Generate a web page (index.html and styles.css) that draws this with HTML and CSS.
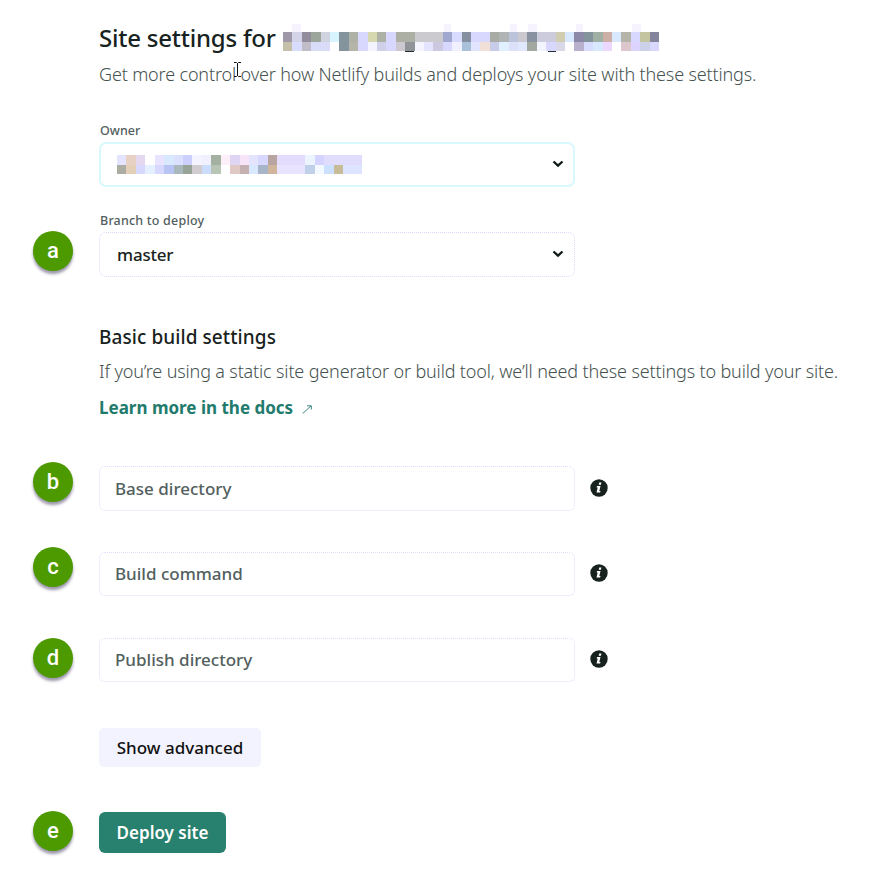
FILE: index.html
```html
<!DOCTYPE html>
<html lang="en">
<head>
<meta charset="utf-8">
<title>Site settings</title>
<link rel="stylesheet" href="styles.css">
</head>
<body>
<main class="page">
  <header class="intro">
    <h1><span class="title-text">Site settings for</span><svg class="mosaic title-mosaic" viewBox="0 0 376 28" width="376" height="28" aria-hidden="true"></svg></h1>
    <p class="lead"><span class="lead-text">Get more control over how Netlify builds and deploys your site with these settings.</span>
      <svg class="cursor" width="9" height="17" viewBox="0 0 9 17" aria-hidden="true"><path d="M1 1.500h2.500l1 1 1-1H8M4.500 2v13M1 15.500h2.500l1-1 1 1H8" fill="none" stroke="#111"/></svg>
    </p>
  </header>

  <section class="field owner">
    <label>Owner</label>
    <div class="select focused">
      <svg class="mosaic owner-mosaic" viewBox="0 0 245 19" width="245" height="19" aria-hidden="true"></svg>
      <svg class="chevron" width="12" height="8" viewBox="0 0 12 8"><path d="M1.500 1.500 6 5.700l4.500-4.200"/></svg>
    </div>
  </section>

  <section class="row branch">
    <span class="badge">a</span>
    <div class="field">
      <label class="branch-label">Branch to deploy</label>
      <div class="select"><span class="master">master</span>
        <svg class="chevron" width="12" height="8" viewBox="0 0 12 8"><path d="M1.500 1.500 6 5.700l4.500-4.200"/></svg>
      </div>
    </div>
  </section>

  <section class="build">
    <h2>Basic build settings</h2>
    <p class="build-text">If you’re using a static site generator or build tool, we’ll need these settings to build your site.</p>
    <a class="docs">Learn more in the docs <svg width="10" height="9" viewBox="0 0 10 9"><path d="M.7 8.500 9 .9M5 .8h4.300v3.700" fill="none" stroke="#3a8581"/></svg></a>
  </section>

  <section class="row base">
    <span class="badge">b</span>
    <div class="input">Base directory</div>
    <svg class="info" width="18" height="18" viewBox="0 0 18 18"><circle cx="9" cy="9" r="8.700"/><path d="M9.200 3.500h2.200l-.5 2.200H8.700zM7 7h3.500l-1.200 5h1.200l-.4 1.500H6.500L7.700 8.400H6.600z"/></svg>
  </section>
  <section class="row command">
    <span class="badge">c</span>
    <div class="input">Build command</div>
    <svg class="info" width="18" height="18" viewBox="0 0 18 18"><circle cx="9" cy="9" r="8.700"/><path d="M9.200 3.500h2.200l-.5 2.200H8.700zM7 7h3.500l-1.200 5h1.200l-.4 1.500H6.500L7.700 8.400H6.600z"/></svg>
  </section>
  <section class="row publish">
    <span class="badge">d</span>
    <div class="input">Publish directory</div>
    <svg class="info" width="18" height="18" viewBox="0 0 18 18"><circle cx="9" cy="9" r="8.700"/><path d="M9.200 3.500h2.200l-.5 2.200H8.700zM7 7h3.500l-1.200 5h1.200l-.4 1.500H6.500L7.700 8.400H6.600z"/></svg>
  </section>

  <button class="advanced">Show advanced</button>

  <section class="row deploy">
    <span class="badge">e</span>
    <button class="primary">Deploy site</button>
  </section>
</main>
<script src="mosaic.js"></script>
</body>
</html>
```
FILE: styles.css
```css
* { box-sizing: border-box; }
body { margin: 0; background: #fff; color: #182321; font-family: "Noto Sans", "Open Sans", sans-serif; }
.page { width: 882px; height: 871px; padding: 20px 0 0 99px; overflow: hidden; }
h1, h2, p { margin: 0; white-space: nowrap; }
.intro { height: 122px; }
h1 { display: flex; height: 36px; line-height: 36px; font-size: 24px; font-weight: 500; }
.title-text { width: 184px; letter-spacing: -0.22px; }
.title-mosaic { margin-top: 4px; }
.mosaic { display: block; flex: none; }
.lead { position: relative; height: 36px; line-height: 36px; font-size: 18px; font-weight: 300; color: #465250; letter-spacing: -0.15px; }
.cursor { position: absolute; left: 134px; top: 5px; }
.owner { height: 90px; margin-top: -18px; }
label { display: block; height: 18px; line-height: 14px; padding-left: 1px; font-size: 12.500px; font-weight: 500; color: #52605e; }
.branch-label { letter-spacing: 0.2px; }
.select { display: flex; align-items: center; justify-content: space-between; width: 476px; height: 45px; padding: 0 10px 0 17px; border: 1px dotted #d8d8fc; border-radius: 7px; font-size: 17px; font-weight: 500; }
.master { letter-spacing: -0.2px; }
.focused { border: 2px solid #d8f8fd; padding: 0 9px 0 16px; }
.chevron { fill: none; stroke: #101c18; stroke-width: 2.300; margin-top: -2px; }
.row { display: flex; margin-left: -66px; }
.badge { flex: none; display: flex; align-items: center; justify-content: center; width: 40px; height: 40px; margin-right: 26px; border-radius: 50%; background: #4c9a00; color: #fff; font-family: Roboto, sans-serif; font-size: 22px; line-height: 40px; font-weight: 500; box-shadow: 0 3px 3px rgba(60,50,90,.5); }
.branch { height: 109px; }
.branch .badge { margin-top: 17px; }
.build { height: 143px; }
h2 { height: 28px; line-height: 28px; font-size: 19px; font-weight: 500; letter-spacing: 0.08px; }
.build-text { height: 40px; line-height: 40px; font-size: 18px; font-weight: 300; color: #465250; letter-spacing: -0.15px; }
.docs { display: block; height: 32px; line-height: 33px; font-size: 17px; font-weight: 700; color: #217b6d; }
.docs svg { margin-left: 4px; }
.input { width: 476px; height: 44px; padding-left: 15px; border: 1px dotted #dcdcff; border-radius: 6px; line-height: 42px; font-size: 17px; font-weight: 500; color: #52605e; }
.info { align-self: flex-start; margin: 13px 0 0 15px; }
.info circle { fill: #17221f; }
.info path { fill: #fff; }
.base { height: 86px; }
.base .badge { margin-top: -4px; }
.base .input { height: 45px; line-height: 43px; }
.command { height: 86px; }
.command .badge { margin-top: -5px; }
.command .info, .publish .info { margin-top: 12px; }
.publish { height: 90px; }
button { display: block; border: 0; padding: 0; font-family: inherit; font-size: 17px; font-weight: 500; white-space: nowrap; }
.advanced { width: 162px; height: 39px; border-radius: 5px; color: #111; background: #f3f3ff; }
.deploy { margin-top: 44px; }
.primary { width: 127px; height: 41px; margin-top: 1px; border-radius: 6px; background: #28806e; color: #fff; font-weight: 600; }
```
FILE: mosaic.js
```js
const titleRows = [
  "9e98a8 d4d4e8 928c9c 9ca69a d0d4e0 d8f4ff 84949c aeb2a6 d8d8ff d6d8b0 aeb2a6 d8d8ff acb0a4 acb0a4 cbcbcf cbcbcf cbcbcf a0a8d0 d8dcff 8490a0 d8d8ff d8d8ff a8aca4 b0b4b4 bcc4dc cbc8d0 8892a0 ccccdd ccccdd d0cdb0 d8e8ff 8c88a8 84949c a0b0a4 ccb0a8 d8e8ff b4b4a8 d8d8ff c4c4a0 84849c",
  "c4bfa8 d8dcff c0bcc8 d8dcf8 d8dcf8 ffffff 84949c b4b4a8 d8d8ff f4f4ff d0d0e8 d8d8ff cbc8d0 909498 f4f4ff e4e4ff ccc8e0 d8d8ff f0f0ff a8c0d8 e0e4ff f0e0d8 c8cce8 e0f0ff dce0f8 e0e8ff a0a8a0 f4f4ff d8d8ff d8d8e8 ffffff b8b0cc d8dcff d8e8ff ecd8ff ffffff dcc8cc dcd4ff ccd0e8 d8d8ff"
];
const ownerRows = [
  "e4e4ff e8d0c4 e4d8f0 ffffff e8e4ff d8e8ff dce0ff ccd0ff f4f4ff f0f0ff a4b0a0 fceffa e0d4f4 f8e4f8 e4e4ff d8d8ff b8a4a0 e4dcfc e4dcfc e4dcfc ecf4ff d4d4ff e0dcfc e0dcfc e0dcfc e0dcfc",
  "acaea4 e4d0b8 d8d8ff e4f0ff d8d8ff b8c4f4 a8b8bc 98a498 d0ccd0 ccdcfc b8c4b4 ffffff e0c8c4 c4b0b0 d8e8ff a8b4c8 d0b49c e8e4ff e8e4ff e8e4ff c0d0e8 f4f8ff cce0ff c8bc98 dce4ff dce4ff"
];
function rect(svg, x, y, w, h, color) {
  const r = document.createElementNS("http://www.w3.org/2000/svg", "rect");
  Object.entries({ x, y, width: w, height: h, fill: color }).forEach(([k, v]) => r.setAttribute(k, v));
  svg.appendChild(r);
}
function draw(selector, rows, width, top) {
  const svg = document.querySelector(selector);
  rows.forEach((row, j) => {
    const cells = row.split(" ");
    cells.forEach((color, i) => {
      const x = Math.round(i * width / cells.length);
      const next = Math.round((i + 1) * width / cells.length);
      rect(svg, x, top + j * 10, next - x, j ? 9 : 10, "#" + color);
    });
  });
  return svg;
}
const title = draw(".title-mosaic", titleRows, 376, 8);
[[9, 9], [161, 7], [227, 7], [245, 9], [293, 7], [349, 9]].forEach(([x, w]) => rect(title, x, 0, w, 8, "#f6f3ff"));
rect(title, 122, 27, 9, 1, "#203030");
rect(title, 265, 27, 8, 1, "#203030");
draw(".owner-mosaic", ownerRows, 245, 0);
```
